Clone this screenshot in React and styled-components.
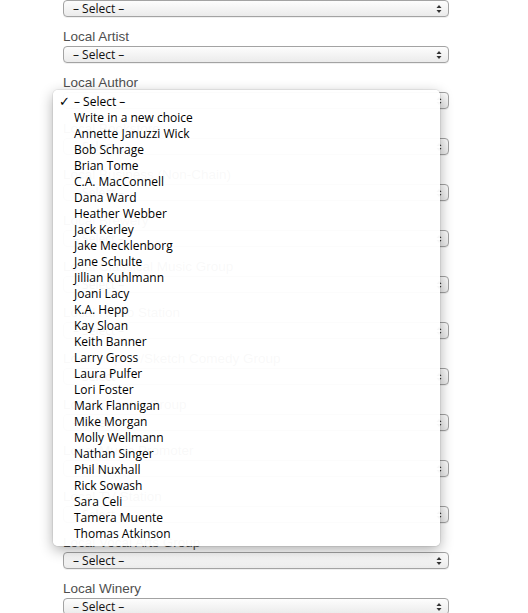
import React from "react";
import styled, { createGlobalStyle } from "styled-components";

const GlobalStyle = createGlobalStyle`
  html, body {
    margin: 0;
    padding: 0;
    background: #ffffff;
    overflow: hidden;
  }
`;

const Page = styled.div`
  position: relative;
  width: 528px;
  height: 613px;
  overflow: hidden;
`;

const Form = styled.div`
  display: flex;
  flex-direction: column;
  width: 386px;
  margin-top: -19px;
  padding-left: 63px;
`;

const Field = styled.div`
  display: flex;
  flex-direction: column;
  margin-bottom: 10px;
`;

const Label = styled.div`
  height: 19px;
  line-height: 19px;
  font-family: "Liberation Sans", Arial, sans-serif;
  font-size: 13.5px;
  color: #4f4f4f;
`;

const SelectBox = styled.div`
  box-sizing: border-box;
  display: flex;
  align-items: center;
  justify-content: space-between;
  height: 17px;
  padding: 0 6px 0 9px;
  border: 1px solid #a3a3a3;
  border-radius: 4px;
  background: linear-gradient(#fdfdfd, #ebebeb);
  box-shadow: 0 1px 0 rgba(0, 0, 0, 0.06);
  font-family: "Open Sans", "DejaVu Sans", sans-serif;
  font-size: 12px;
  color: #111111;
`;

const SelectText = styled.span`
  line-height: 15px;
`;

/* open list for the author field, drawn over the form */
const Menu = styled.div`
  position: absolute;
  left: 53px;
  top: 90px;
  width: 387px;
  box-sizing: border-box;
  padding: 4px 0;
  border-radius: 5px;
  background: rgba(255, 255, 255, 0.965);
  box-shadow: 0 4px 14px rgba(0, 0, 0, 0.32), 0 0 0 1px rgba(0, 0, 0, 0.06);
  font-family: "Open Sans", "DejaVu Sans", sans-serif;
  font-size: 12px;
  color: #000000;
`;

const Option = styled.div`
  display: grid;
  grid-template-columns: 15px 1fr;
  height: 16px;
  line-height: 16px;
  padding-left: 6px;
`;

const Check = styled.span`
  font-family: "DejaVu Sans", sans-serif;
  font-size: 13px;
  font-weight: bold;
`;

const Stepper = () => (
  <svg width="6" height="10" viewBox="0 0 6 10">
    <path d="M3 1 L5.5 4 L0.5 4 Z" fill="#333" />
    <path d="M3 9 L5.5 6 L0.5 6 Z" fill="#333" />
  </svg>
);

const fields = [
  "Local Arts Organization",
  "Local Artist",
  "Local Author",
  "Local Bookstore",
  "Local Business (Non-Chain)",
  "Local Brewery",
  "Local Classical Music Group",
  "Local Radio Station",
  "Local Improv/Sketch Comedy Group",
  "Local Theater Group",
  "Local Music Promoter",
  "Local TV Station",
  "Local Vocal Arts Group",
  "Local Winery",
];

const authors = [
  "– Select –",
  "Write in a new choice",
  "Annette Januzzi Wick",
  "Bob Schrage",
  "Brian Tome",
  "C.A. MacConnell",
  "Dana Ward",
  "Heather Webber",
  "Jack Kerley",
  "Jake Mecklenborg",
  "Jane Schulte",
  "Jillian Kuhlmann",
  "Joani Lacy",
  "K.A. Hepp",
  "Kay Sloan",
  "Keith Banner",
  "Larry Gross",
  "Laura Pulfer",
  "Lori Foster",
  "Mark Flannigan",
  "Mike Morgan",
  "Molly Wellmann",
  "Nathan Singer",
  "Phil Nuxhall",
  "Rick Sowash",
  "Sara Celi",
  "Tamera Muente",
  "Thomas Atkinson",
];

const App = () => {
  return (
    <Page>
      <GlobalStyle />
      <Form>
        {fields.map((name) => (
          <Field key={name}>
            <Label>{name}</Label>
            <SelectBox>
              <SelectText>– Select –</SelectText>
              <Stepper />
            </SelectBox>
          </Field>
        ))}
      </Form>
      <Menu>
        {authors.map((name, i) => (
          <Option key={name}>
            <Check>{i === 0 ? "✓" : ""}</Check>
            <span>{name}</span>
          </Option>
        ))}
      </Menu>
    </Page>
  );
};

export default App;
